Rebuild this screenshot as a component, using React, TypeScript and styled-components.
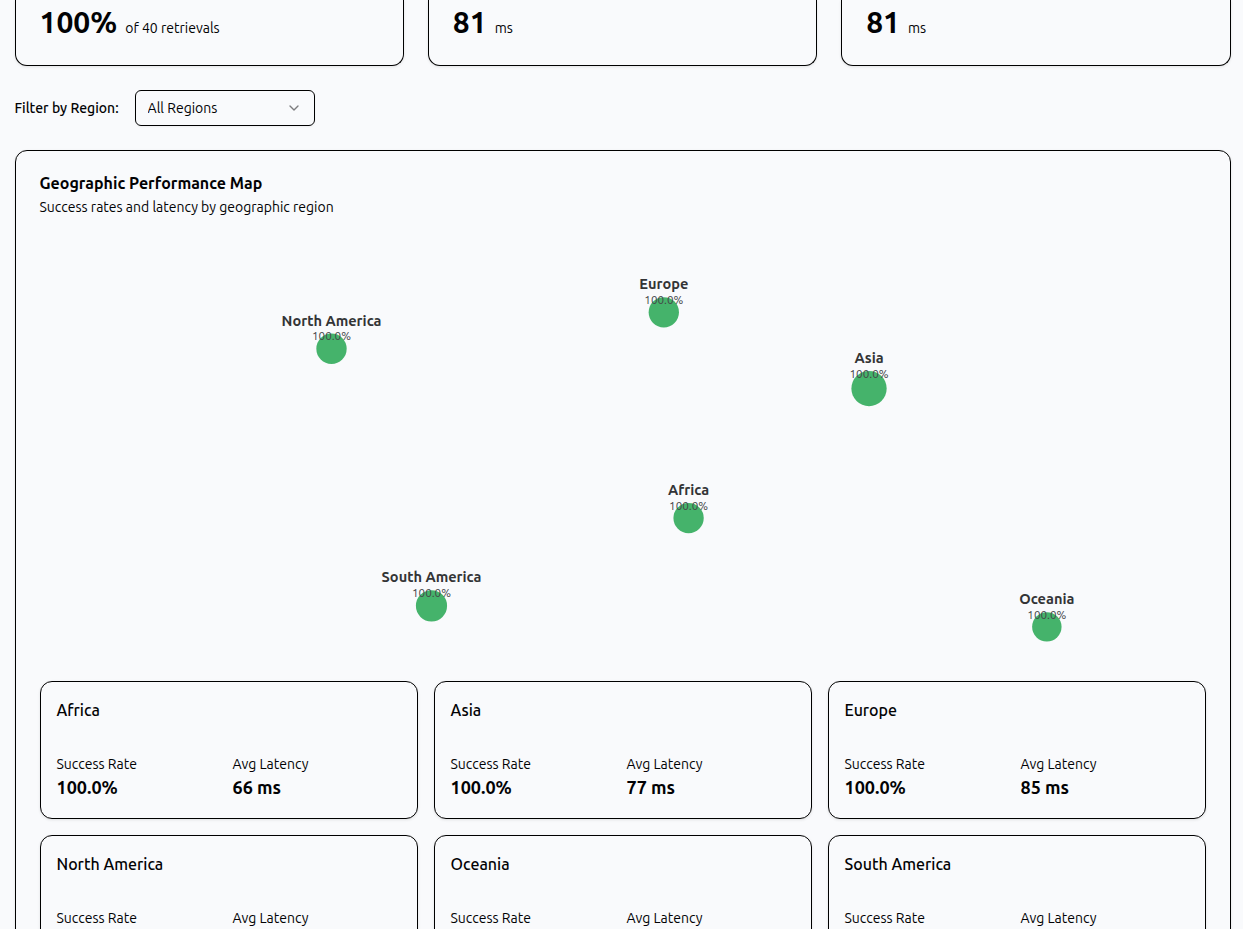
import React from "react";
import styled, { createGlobalStyle } from "styled-components";
import { ChevronDown } from "lucide-react";

const GlobalStyle = createGlobalStyle`
  *, *::before, *::after { box-sizing: border-box; }
  body {
    margin: 0;
    background: #f9fafc;
    color: #020204;
    font-family: Ubuntu, "Noto Sans", sans-serif;
    font-size: 14px;
    line-height: 20px;
  }
  h2, h3, p, dl, dt, dd { margin: 0; }
`;

const Page = styled.main`
  height: 100vh;
  padding: 0 12px 0 14px;
  overflow: hidden;
`;

const Content = styled.div`
  display: flex;
  flex-direction: column;
  gap: 24px;
  max-width: 1216px;
  margin: 0 auto;
`;

const Columns = styled.div<{ $gap: number }>`
  display: grid;
  grid-template-columns: repeat(3, minmax(0, 1fr));
  gap: ${({ $gap }) => $gap}px;
`;

const Card = styled.section`
  border: 1px solid #000;
  border-radius: 12px;
  background: #f9fafc;
  box-shadow: 0 1px 3px rgba(0, 0, 0, 0.1);
`;

const StatCard = styled(Card)`
  display: flex;
  align-items: baseline;
  gap: 8px;
  padding: 4px 24px 25px;
  border-top: 0;
  border-radius: 0 0 12px 12px;
`;

const StatValue = styled.strong`
  font-size: 30px;
  line-height: 36px;
  font-weight: 600;
`;

const FilterRow = styled.div`
  display: flex;
  align-items: center;
  gap: 16px;
`;

const FilterLabel = styled.label`
  font-weight: 500;
`;

const SelectBox = styled.div`
  position: relative;
  width: 180px;

  svg {
    position: absolute;
    top: 10px;
    right: 13px;
    opacity: 0.5;
    pointer-events: none;
  }
`;

const Select = styled.select`
  display: block;
  width: 100%;
  height: 36px;
  padding: 0 36px 0 12px;
  appearance: none;
  border: 1px solid #000;
  border-radius: 6px;
  background: transparent;
  box-shadow: 0 1px 2px rgba(0, 0, 0, 0.05);
  color: inherit;
  font: inherit;
`;

const MapCard = styled(Card)`
  padding: 20px 24px 24px;
`;

const Title = styled.h2`
  font-size: 16px;
  line-height: 24px;
  font-weight: 600;
`;

const Subtitle = styled.p`
  padding-top: 2px;
`;

const RegionMap = styled.svg`
  display: block;
  width: 100%;
  height: 448px;
  margin-bottom: 16px;
`;

const PinName = styled.text`
  font-size: 10px;
  font-weight: 600;
  text-anchor: middle;
  fill: #333436;
`;

const PinRate = styled.text`
  font-size: 8px;
  text-anchor: middle;
  fill: #444547;
`;

const RegionCard = styled(Card)`
  min-height: 138px;
  padding: 16px;
`;

const RegionName = styled.h3`
  font-size: 16px;
  line-height: 24px;
  font-weight: 500;
`;

const Metrics = styled.dl`
  display: grid;
  grid-template-columns: 1fr 1fr;
  gap: 8px;
  padding-top: 32px;
`;

const MetricValue = styled.dd`
  font-size: 18px;
  line-height: 26px;
  font-weight: 600;
`;

const stats = [
  { value: "100%", note: "of 40 retrievals" },
  { value: "81", note: "ms" },
  { value: "81", note: "ms" },
];

const pins = [
  { name: "North America", x: 200, y: 90.4, r: 10.4 },
  { name: "Europe", x: 428, y: 65.4, r: 10.4 },
  { name: "Asia", x: 568.8, y: 117.7, r: 12.1 },
  { name: "Africa", x: 445, y: 206.6, r: 10.4 },
  { name: "South America", x: 268.6, y: 266.8, r: 10.7 },
  { name: "Oceania", x: 690.8, y: 281.2, r: 10.1 },
];

const regions: { name: string; rate?: string; latency?: string }[] = [
  { name: "Africa", rate: "100.0%", latency: "66 ms" },
  { name: "Asia", rate: "100.0%", latency: "77 ms" },
  { name: "Europe", rate: "100.0%", latency: "85 ms" },
  { name: "North America" },
  { name: "Oceania" },
  { name: "South America" },
];

export default function App() {
  return (
    <>
      <GlobalStyle />
      <Page>
        <Content>
          <Columns $gap={24}>
            {stats.map((stat, i) => (
              <StatCard key={i}>
                <StatValue>{stat.value}</StatValue>
                <span>{stat.note}</span>
              </StatCard>
            ))}
          </Columns>

          <FilterRow>
            <FilterLabel htmlFor="region">Filter by Region:</FilterLabel>
            <SelectBox>
              <Select id="region" defaultValue="all">
                <option value="all">All Regions</option>
              </Select>
              <ChevronDown size={16} />
            </SelectBox>
          </FilterRow>

          <MapCard>
            <Title>Geographic Performance Map</Title>
            <Subtitle>Success rates and latency by geographic region</Subtitle>
            <RegionMap viewBox="0 0 800 300" preserveAspectRatio="xMidYMin meet">
              {pins.map((pin) => (
                <g key={pin.name} transform={`translate(${pin.x} ${pin.y})`}>
                  <circle r={pin.r} fill="#45b36b" />
                  <PinName y={-pin.r - 5.5}>{pin.name}</PinName>
                  <PinRate y={4.6 - pin.r}>100.0%</PinRate>
                </g>
              ))}
            </RegionMap>
            <Columns $gap={16}>
              {regions.map((region) => (
                <RegionCard key={region.name}>
                  <RegionName>{region.name}</RegionName>
                  <Metrics>
                    <div>
                      <dt>Success Rate</dt>
                      {region.rate && <MetricValue>{region.rate}</MetricValue>}
                    </div>
                    <div>
                      <dt>Avg Latency</dt>
                      {region.latency && <MetricValue>{region.latency}</MetricValue>}
                    </div>
                  </Metrics>
                </RegionCard>
              ))}
            </Columns>
          </MapCard>
        </Content>
      </Page>
    </>
  );
}
